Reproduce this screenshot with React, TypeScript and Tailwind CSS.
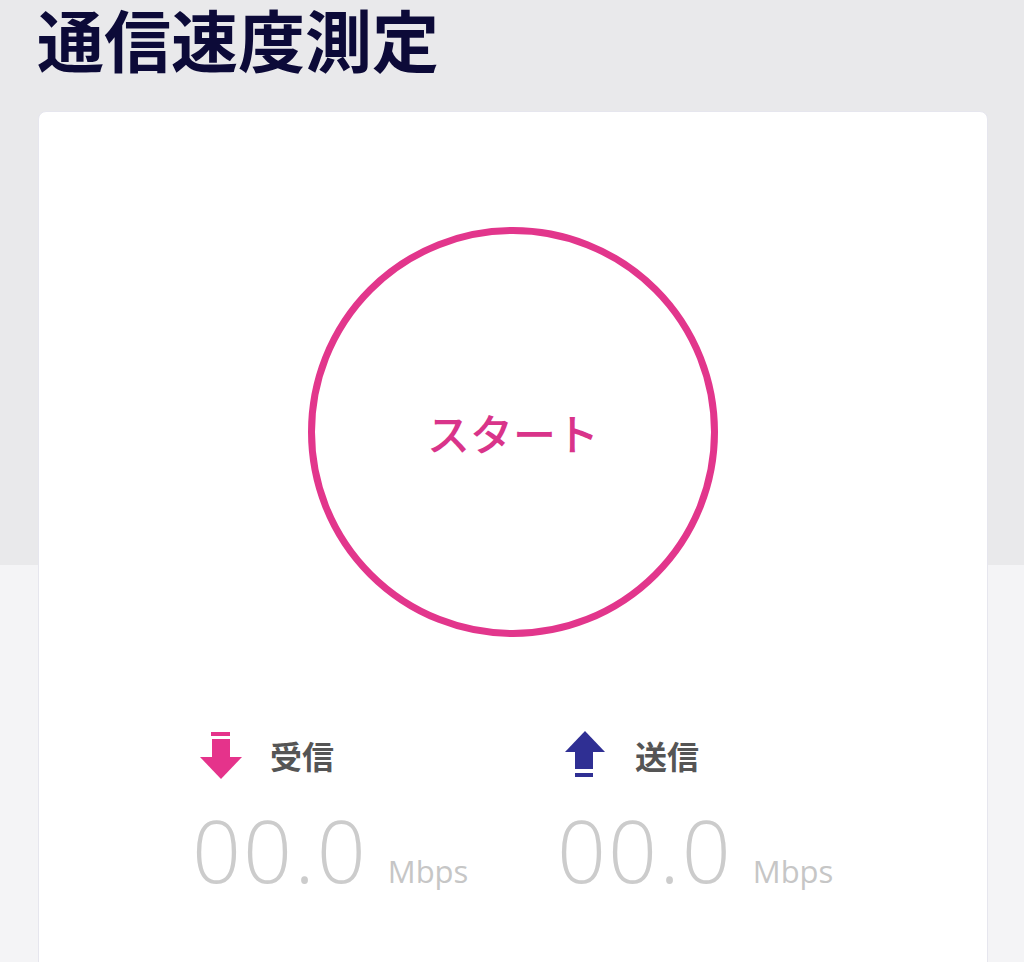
import React from "react";

const jp = "font-['Noto_Sans_CJK_JP','Noto_Sans',sans-serif]";

function DownIcon() {
  return (
    <svg width="42" height="48" viewBox="0 0 42 48" className="shrink-0">
      <rect x="11" y="1" width="19" height="4" fill="#e5338b" />
      <rect x="12" y="8" width="18" height="19" fill="#e5338b" />
      <polygon points="0,26 42,26 21,48" fill="#e5338b" />
    </svg>
  );
}

function UpIcon() {
  return (
    <svg width="42" height="48" viewBox="0 0 42 48" className="shrink-0">
      <polygon points="0,21 40,21 20,0" fill="#2f2f93" />
      <rect x="10" y="20" width="18" height="18" fill="#2f2f93" />
      <rect x="10" y="42" width="18" height="4" fill="#2f2f93" />
    </svg>
  );
}

function Stat({ icon, label }: { icon: React.ReactNode; label: string }) {
  return (
    <div className="w-[365px]">
      <div className="flex items-center h-[48px]">
        {icon}
        <span className={`${jp} ml-[28px] text-[32px] leading-none font-bold text-[#555555]`}>{label}</span>
      </div>
      <div className="flex items-baseline mt-[28px] -ml-[8px] font-['Open_Sans','Noto_Sans',sans-serif]">
        <span className="text-[86px] leading-none font-light tracking-[2px] text-[#cccccc]">00.0</span>
        <span className="ml-[20px] text-[31px] leading-none text-[#c6c6c6]">Mbps</span>
      </div>
    </div>
  );
}

export default function App() {
  return (
    <div className="min-h-screen overflow-hidden bg-[linear-gradient(to_bottom,#e9e9eb_565px,#f4f4f6_565px)]">
      <div className="h-[111px] pl-[37px] pt-[1px]">
        <h1 className={`${jp} text-[67px] leading-[1.1] font-bold text-[#0c0a38]`}>通信速度測定</h1>
      </div>
      <div className="ml-[38px] w-[950px] bg-white rounded-lg border border-[#e6e6ee] pb-[200px]">
        <div className="flex justify-center pt-[115px]">
          <button className={`${jp} w-[410px] h-[410px] rounded-full border-[7px] border-[#e2368c] flex items-center justify-center text-[43px] font-medium text-[#d9348a]`}>
            スタート
          </button>
        </div>
        <div className="flex pl-[161px] mt-[94px]">
          <Stat icon={<DownIcon />} label="受信" />
          <Stat icon={<UpIcon />} label="送信" />
        </div>
      </div>
    </div>
  );
}
